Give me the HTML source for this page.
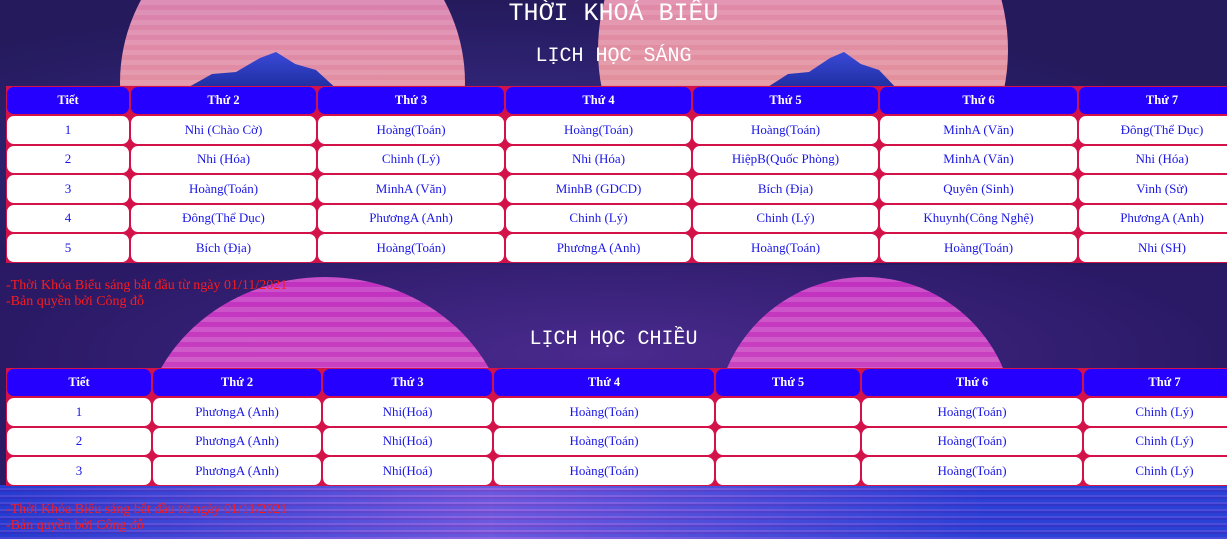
<!DOCTYPE html>
<html><head><meta charset="utf-8"><style>
body{margin:0;width:1227px;height:539px;overflow:hidden;position:relative;background:#2a1f6e;font-family:"Liberation Serif",serif}
.bg{position:absolute;left:0;width:1227px;overflow:hidden}
.sun{position:absolute;border-radius:50%;background:repeating-linear-gradient(180deg,rgba(255,255,255,.12) 0 5px,rgba(0,0,0,0) 5px 10px),linear-gradient(180deg,#c96bb8,#e08aa8 40%,#e8a080)}
.sun2{background:repeating-linear-gradient(180deg,rgba(255,255,255,.15) 0 5px,rgba(0,0,0,0) 5px 10px),linear-gradient(180deg,#c030c0,#d050c0 50%,#c070b0)}
.mt{position:absolute;background:linear-gradient(180deg,#3a4ad8,#1b2a9a);clip-path:polygon(0 100%,20% 55%,35% 50%,50% 15%,60% 0,72% 30%,85% 45%,100% 100%)}
.t{position:absolute;left:0;width:1227px;text-align:center;color:#fff;font-family:"Liberation Mono",monospace}
table{position:absolute;left:6px;border-collapse:separate;border-spacing:0;table-layout:fixed;background:#d3124a}
td,th{border:1px solid #d3124a;border-radius:8px;text-align:center;font-size:13px;padding:0;overflow:hidden;white-space:nowrap}
th{background:#2500ff;color:#fff;font-weight:bold;font-size:12.5px}
td{background:#fff;color:#1a16e6}
.n{position:absolute;left:6px;color:#ff1a1a;font-size:14px;line-height:16px}
</style></head><body>
<div class="bg" style="top:0;height:265px;background:radial-gradient(ellipse at 40% 60%,#3b2c8c,#241a5c 70%)">
 <div class="sun" style="left:120px;top:-90px;width:345px;height:345px"></div>
 <div class="sun" style="left:598px;top:-150px;width:410px;height:400px"></div>
 <div class="mt" style="left:180px;top:52px;width:160px;height:40px"></div>
 <div class="mt" style="left:760px;top:52px;width:140px;height:40px"></div>
</div>
<div class="bg" style="top:265px;height:222px;background:radial-gradient(ellipse at 50% 40%,#4a2a8e,#2a1a66 70%)">
 <div class="sun sun2" style="left:140px;top:12px;width:370px;height:340px"></div>
 <div class="sun sun2" style="left:715px;top:12px;width:300px;height:300px"></div>
</div>
<div class="bg" style="top:485px;height:54px;background:repeating-linear-gradient(180deg,#2a46d8 0 3px,#6a5ae0 3px 5px,#3a30c0 5px 7px)"></div>
<div class="bg" style="top:485px;height:54px;background:linear-gradient(90deg,rgba(30,50,200,.5),rgba(200,120,230,.4) 40%,rgba(40,60,210,.45) 80%)"></div>

<div class="t" style="top:1px;font-size:25px;line-height:26px">THỜI KHOÁ BIỂU</div>
<div class="t" style="top:46px;font-size:20px;line-height:22px">LỊCH HỌC SÁNG</div>

<table style="top:86px;width:1240px">
<colgroup><col style="width:124px"><col style="width:187px"><col style="width:188px"><col style="width:187px"><col style="width:187px"><col style="width:199px"><col style="width:168px"></colgroup>
<tr style="height:29px"><th>Tiết</th><th>Thứ 2</th><th>Thứ 3</th><th>Thứ 4</th><th>Thứ 5</th><th>Thứ 6</th><th>Thứ 7</th></tr>
<tr style="height:29.5px"><td>1</td><td>Nhi (Chào Cờ)</td><td>Hoàng(Toán)</td><td>Hoàng(Toán)</td><td>Hoàng(Toán)</td><td>MinhA (Văn)</td><td>Đông(Thể Dục)</td></tr>
<tr style="height:29.5px"><td>2</td><td>Nhi (Hóa)</td><td>Chinh (Lý)</td><td>Nhi (Hóa)</td><td>HiệpB(Quốc Phòng)</td><td>MinhA (Văn)</td><td>Nhi (Hóa)</td></tr>
<tr style="height:29.5px"><td>3</td><td>Hoàng(Toán)</td><td>MinhA (Văn)</td><td>MinhB (GDCD)</td><td>Bích (Địa)</td><td>Quyên (Sinh)</td><td>Vinh (Sử)</td></tr>
<tr style="height:29.5px"><td>4</td><td>Đông(Thể Dục)</td><td>PhươngA (Anh)</td><td>Chinh (Lý)</td><td>Chinh (Lý)</td><td>Khuynh(Công Nghệ)</td><td>PhươngA (Anh)</td></tr>
<tr style="height:29.5px"><td>5</td><td>Bích (Địa)</td><td>Hoàng(Toán)</td><td>PhươngA (Anh)</td><td>Hoàng(Toán)</td><td>Hoàng(Toán)</td><td>Nhi (SH)</td></tr>
</table>
<div class="n" style="top:278px">-Thời Khóa Biểu sáng bắt đầu từ ngày 01/11/2021<br>-Bản quyền bởi Công đỗ</div>

<div class="t" style="top:329px;font-size:20px;line-height:22px">LỊCH HỌC CHIỀU</div>
<table style="top:368px;width:1240px">
<colgroup><col style="width:146px"><col style="width:170px"><col style="width:171px"><col style="width:222px"><col style="width:146px"><col style="width:222px"><col style="width:163px"></colgroup>
<tr style="height:29px"><th>Tiết</th><th>Thứ 2</th><th>Thứ 3</th><th>Thứ 4</th><th>Thứ 5</th><th>Thứ 6</th><th>Thứ 7</th></tr>
<tr style="height:29.5px"><td>1</td><td>PhươngA (Anh)</td><td>Nhi(Hoá)</td><td>Hoàng(Toán)</td><td></td><td>Hoàng(Toán)</td><td>Chinh (Lý)</td></tr>
<tr style="height:29.5px"><td>2</td><td>PhươngA (Anh)</td><td>Nhi(Hoá)</td><td>Hoàng(Toán)</td><td></td><td>Hoàng(Toán)</td><td>Chinh (Lý)</td></tr>
<tr style="height:29.5px"><td>3</td><td>PhươngA (Anh)</td><td>Nhi(Hoá)</td><td>Hoàng(Toán)</td><td></td><td>Hoàng(Toán)</td><td>Chinh (Lý)</td></tr>
</table>
<div class="n" style="top:502px">-Thời Khóa Biểu sáng bắt đầu từ ngày 01/11/2021<br>-Bản quyền bởi Công đỗ</div>
</body></html>
